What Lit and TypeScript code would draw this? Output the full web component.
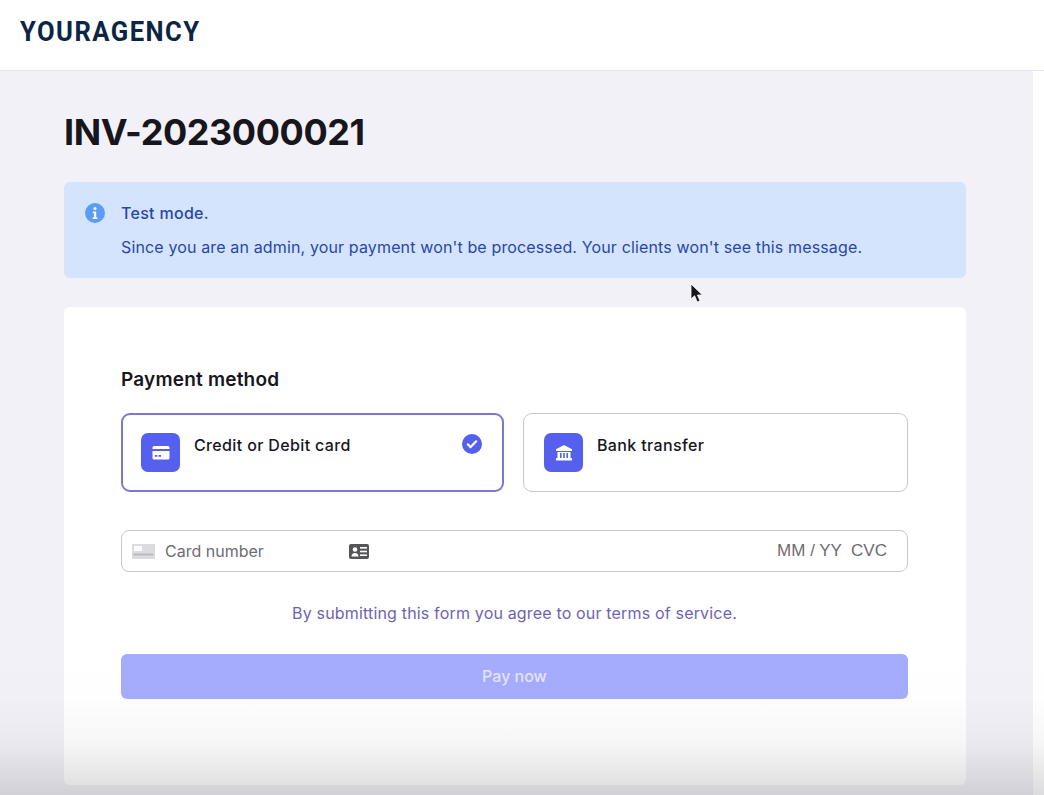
import { LitElement, html, css } from "lit";
import { customElement } from "lit/decorators.js";

@customElement("app-root")
export class AppRoot extends LitElement {
  static styles = css`
    :host { display: block; position: relative; width: 1044px; height: 795px; overflow: hidden; background: #fff; font-family: Inter, "Liberation Sans", sans-serif; color: #17161c; }
    .header { height: 70px; box-sizing: content-box; border-bottom: 1px solid #e6e6ea; background: #fff; padding-left: 20px; display: flex; align-items: center; }
    .logo { font-family: Roboto, sans-serif; font-weight: 700; font-size: 28px; letter-spacing: 1.62px; color: #0b2545; line-height: 1; margin-top: -6px; transform: scaleX(0.914); transform-origin: left center; }
    .body { display: flex; height: 724px; }
    .main { width: 1033px; background: #f2f1f7; padding: 0 67px 0 64px; box-sizing: border-box; }
    h1 { margin: 39px 0 0; font-size: 36px; line-height: 44px; font-weight: 700; color: #17161c; letter-spacing: -0.43px; }
    .alert { margin-top: 28px; height: 96px; box-sizing: border-box; background: #d4e4fd; border-radius: 6px; padding: 21px 24px 0 21px; display: flex; gap: 16px; color: #2a47a6; font-size: 16px; letter-spacing: 0.14px; }
    .alert svg { width: 20px; height: 20px; flex: none; }
    .alert-title { font-weight: 500; line-height: 20px; letter-spacing: 0.3px; }
    .alert-text { margin-top: 14px; line-height: 20px; }
    .card { margin-top: 29px; height: 478px; box-sizing: border-box; background: #fff; border-radius: 6px; padding: 60px 58px 0 57px; }
    h2 { margin: 0; font-size: 19px; line-height: 24px; font-weight: 600; color: #17161c; letter-spacing: 0.2px; padding-top: 1px; }
    .methods { display: flex; gap: 19px; margin-top: 21px; }
    .method { position: relative; flex: 1; height: 79px; box-sizing: border-box; border: 1px solid #c9c8ce; border-radius: 9px; padding: 19px 20px; display: flex; gap: 14px; font-size: 16px; font-weight: 500; letter-spacing: 0.36px; }
    .method.on { border: 2px solid #7a78d0; padding: 18px 18px; }
    .method-label { line-height: 20px; margin-top: 2px; }
    .tile { width: 39px; height: 39px; border-radius: 7px; background: #5660ee; display: flex; align-items: center; justify-content: center; flex: none; }
    .tile svg { width: 22px; height: 22px; }
    .check { position: absolute; right: 20px; top: 19px; width: 20px; height: 20px; }
    .input { margin-top: 38px; height: 42px; box-sizing: border-box; border: 1px solid #c9c8ce; border-radius: 8px; display: flex; align-items: center; padding: 0 20px 0 10px; color: #6d6c72; font-size: 16px; }
    .input .cc { width: 23px; height: 15px; flex: none; }
    .ph { margin-left: 10px; width: 184px; font-weight: 400; }
    .idc { width: 20px; height: 15px; flex: none; }
    .exp { margin-left: auto; font-family: "Liberation Sans", sans-serif; font-size: 17px; white-space: pre; }
    .terms { margin-top: 30px; text-align: center; font-size: 16px; line-height: 22px; color: #6e62b6; letter-spacing: 0.17px; }
    .pay { margin-top: 30px; height: 45px; width: 100%; display: block; border: 0; border-radius: 6px; background: #a5acfd; color: #e3e4ff; font: 500 16px Inter, sans-serif; padding: 0 0 2px; }
    .strip { flex: 1; background: #fff; }
    .shade { position: absolute; left: 0; right: 0; bottom: 0; height: 165px; background: linear-gradient(to bottom, rgba(40,40,50,0) 0%, rgba(40,40,50,0.005) 40%, rgba(40,40,50,0.04) 68%, rgba(40,40,50,0.16) 100%); pointer-events: none; }
    .cursor { position: absolute; left: 690px; top: 283px; width: 14px; height: 21px; }
  `;

  render() {
    return html`
      <div class="header"><div class="logo">YOURAGENCY</div></div>
      <div class="body">
        <div class="main">
          <h1>INV-2023000021</h1>
          <div class="alert">
            <svg viewBox="0 0 20 20"><circle cx="10" cy="10" r="10" fill="#5b9df5"/><circle cx="10" cy="5.6" r="1.5" fill="#fff"/><path d="M7.8 8.4h3.4v6h1.2v1.6H7.6v-1.6h1.3V10H7.8z" fill="#fff"/></svg>
            <div>
              <div class="alert-title">Test mode.</div>
              <div class="alert-text">Since you are an admin, your payment won't be processed. Your clients won't see this message.</div>
            </div>
          </div>
          <div class="card">
            <h2>Payment method</h2>
            <div class="methods">
              <div class="method on">
                <div class="tile"><svg viewBox="0 0 22 22"><path d="M2.5 5.5a1.5 1.5 0 0 1 1.5-1.5h14a1.5 1.5 0 0 1 1.5 1.5V7h-17zM2.5 9h17v7a1.5 1.5 0 0 1-1.5 1.5H4A1.5 1.5 0 0 1 2.5 16z" fill="#fff"/><rect x="5" y="13" width="2.4" height="1.8" fill="#5660ee"/><rect x="8.6" y="13" width="2.4" height="1.8" fill="#5660ee"/></svg></div>
                <div class="method-label">Credit or Debit card</div>
                <svg class="check" viewBox="0 0 20 20"><circle cx="10" cy="10" r="10" fill="#5660ee"/><path d="M5.8 10.3l2.8 2.8 5.6-5.8" fill="none" stroke="#fff" stroke-width="2.2" stroke-linecap="round" stroke-linejoin="round"/></svg>
              </div>
              <div class="method">
                <div class="tile"><svg viewBox="0 0 22 22"><path d="M11 3l8 4.300V9H3V7.300z" fill="#fff"/><path d="M4.500 10h13v6h1.500v2.500H3V16h1.500z" fill="#fff"/><rect x="7" y="11" width="1.600" height="5" fill="#5660ee"/><rect x="10.200" y="11" width="1.600" height="5" fill="#5660ee"/><rect x="13.400" y="11" width="1.600" height="5" fill="#5660ee"/></svg></div>
                <div class="method-label">Bank transfer</div>
              </div>
            </div>
            <div class="input">
              <svg class="cc" viewBox="0 0 23 15"><rect width="23" height="15" fill="#dcdce0"/><rect x="2" y="2" width="8" height="5" fill="#fbfbfd"/><rect x="1.500" y="9.500" width="20" height="2" fill="#b9b9be"/></svg>
              <span class="ph">Card number</span>
              <svg class="idc" viewBox="0 0 20 15"><rect width="20" height="15" rx="2" fill="#555459"/><circle cx="6" cy="5.500" r="2.300" fill="#fff"/><path d="M2.500 12.500c0-2.600 1.600-3.600 3.500-3.600s3.500 1 3.500 3.600z" fill="#fff"/><rect x="11" y="3" width="7" height="1.600" fill="#fff"/><rect x="11" y="6.700" width="7" height="1.600" fill="#fff"/><rect x="11" y="10.400" width="7" height="1.600" fill="#fff"/></svg>
              <span class="exp">MM / YY  CVC</span>
            </div>
            <div class="terms">By submitting this form you agree to our terms of service.</div>
            <button class="pay">Pay now</button>
          </div>
        </div>
        <div class="strip"></div>
      </div>
      <div class="shade"></div>
      <svg class="cursor" viewBox="0 0 14 21"><path d="M1 1v15l3.600-3.300L7.200 19l2.800-1.200-2.600-5.800h5z" fill="#16161c" stroke="#fff" stroke-width="0.800"/></svg>
    `;
  }
}
